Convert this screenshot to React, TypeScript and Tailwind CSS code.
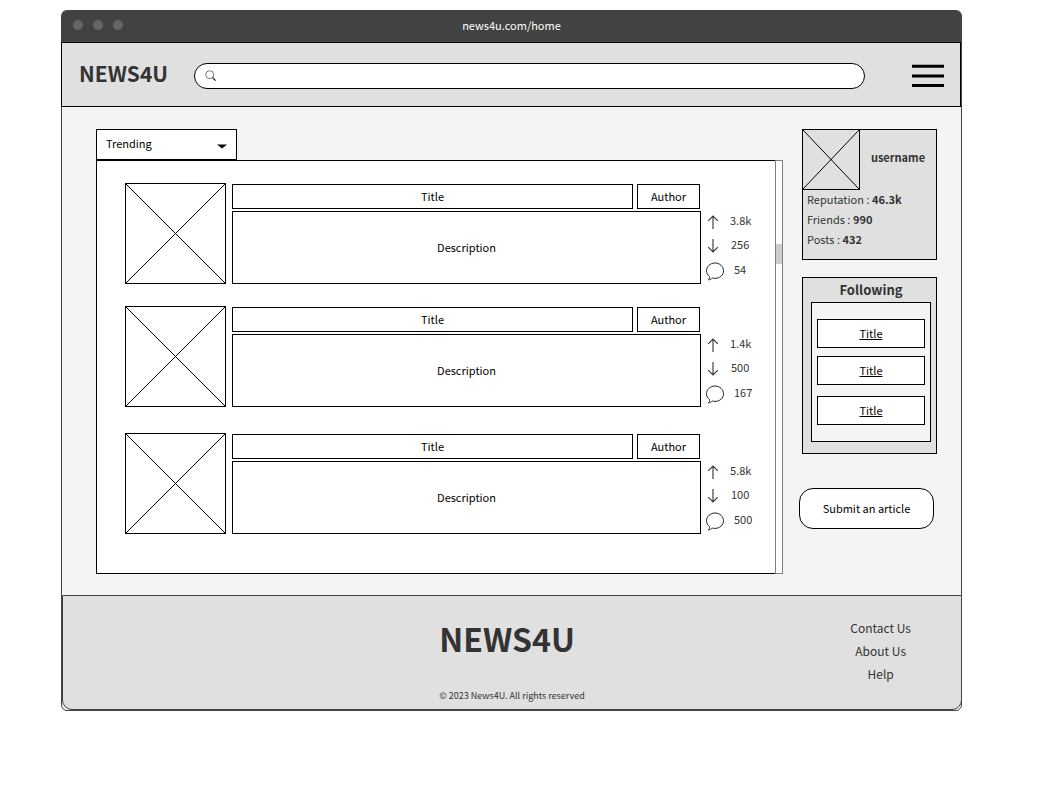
import type { ReactNode } from "react";

type Article = { up: string; down: string; comments: string };

const articles: Article[] = [
  { up: "3.8k", down: "256", comments: "54" },
  { up: "1.4k", down: "500", comments: "167" },
  { up: "5.8k", down: "100", comments: "500" },
];

const profileStats = [
  { label: "Reputation", value: "46.3k" },
  { label: "Friends", value: "990" },
  { label: "Posts", value: "432" },
];

function Placeholder({ className }: { className: string }) {
  return (
    <div className={`shrink-0 border border-black ${className}`}>
      <svg className="block h-full w-full" viewBox="0 0 100 100" preserveAspectRatio="none" aria-hidden="true">
        <path d="M0 0 100 100M100 0 0 100" stroke="#000" strokeWidth="1" vectorEffect="non-scaling-stroke" />
      </svg>
    </div>
  );
}

function ArrowUp() {
  return (
    <svg width="12" height="16" viewBox="0 0 12 16" fill="none" stroke="#333" strokeWidth="1.1" role="img" aria-label="Upvotes">
      <path d="M6 15V2M1.200 6.800 6 2l4.800 4.800" />
    </svg>
  );
}

function ArrowDown() {
  return (
    <svg width="12" height="16" viewBox="0 0 12 16" fill="none" stroke="#333" strokeWidth="1.1" role="img" aria-label="Downvotes">
      <path d="M6 1v13M1.200 9.200 6 14l4.800-4.800" />
    </svg>
  );
}

function Comment() {
  return (
    <svg width="18" height="20" viewBox="0 0 18 20" fill="none" stroke="#222" role="img" aria-label="Comments">
      <path d="M3.600 15.600C1.700 14.200.500 12 .500 9.800.500 5.500 4.300 2 9 2s8.500 3.500 8.500 7.800S13.700 17.400 9 17.400c-1 0-1.900-.1-2.800-.4-.9 1.100-2.100 1.700-3.900 1.900 1-.8 1.500-1.900 1.300-3.300Z" />
    </svg>
  );
}

function Stat({ icon, value, className }: { icon: ReactNode; value: string; className: string }) {
  return (
    <li className={`flex h-6 items-center ${className}`}>
      {icon}
      <span className="pb-1">{value}</span>
    </li>
  );
}

function ArticleRow({ article }: { article: Article }) {
  return (
    <article className="flex last:pt-1">
      <Placeholder className="h-[101px] w-[101px]" />
      <div className="ml-1.5 flex min-w-0 flex-1 flex-col gap-0.5 pt-px text-center">
        <div className="flex gap-1 pr-px">
          <h2 className="flex-1 border border-black leading-[23px]">Title</h2>
          <p className="w-[63px] border border-black leading-[23px]">Author</p>
        </div>
        <p className="flex flex-1 items-center justify-center border border-black pb-0.5">Description</p>
      </div>
      <ul className="w-[74px] shrink-0 pt-[27px] text-[#333]">
        <Stat icon={<ArrowUp />} value={article.up} className="gap-[11px] pl-1.5" />
        <Stat icon={<ArrowDown />} value={article.down} className="gap-3 pl-1.5" />
        <Stat icon={<Comment />} value={article.comments} className="mt-px gap-2.5 pl-[5px]" />
      </ul>
    </article>
  );
}

export default function App() {
  return (
    <div className="min-h-screen bg-white pt-2.5 pr-[92px] pl-[61px] font-['Noto_Sans_CJK_SC',sans-serif] text-[11px] leading-5 text-black">
      <div className="rounded-[6px] border border-[#424242] bg-[#f4f4f4]">
        <div className="grid h-[31px] grid-cols-[1fr_auto_1fr] items-center rounded-t-[4px] bg-[#424242] pb-[3px]">
          <div className="flex gap-2.5 pl-[11px]">
            <span className="h-2.5 w-2.5 rounded-full bg-[#666]" />
            <span className="h-2.5 w-2.5 rounded-full bg-[#666]" />
            <span className="h-2.5 w-2.5 rounded-full bg-[#666]" />
          </div>
          <span className="text-white">news4u.com/home</span>
        </div>

        <header className="-ml-px flex h-[65px] items-center border border-black bg-[#e0e0e0] pt-0.5 pr-4 pl-[17px]">
          <a href="#home" className="w-[115px] pb-1.5 text-[21px] leading-8 font-bold text-[#333]">
            NEWS4U
          </a>
          <div className="flex h-[26px] flex-1 items-center rounded-full border border-black bg-white pl-2.5">
            <svg width="12" height="12" viewBox="0 0 12 12" fill="none" stroke="#222" aria-hidden="true">
              <circle cx="4.700" cy="4.700" r="4" strokeWidth=".6" />
              <path d="m7.600 7.600 3 3" strokeWidth="1.300" />
            </svg>
            <input type="search" aria-label="Search" className="ml-2 min-w-0 flex-1 bg-transparent pr-4 outline-none" />
          </div>
          <button type="button" aria-label="Menu" className="ml-[47px]">
            <svg className="block" width="32" height="24" viewBox="0 0 32 24" stroke="#000" strokeWidth="3" aria-hidden="true">
              <path d="M0 2.300h32M0 12h32M0 21.500h32" />
            </svg>
          </button>
        </header>

        <main className="flex gap-4 pt-[22px] pr-6 pb-[21px] pl-[34px]">
          <section className="min-w-0 flex-1">
            <div className="relative w-[141px]">
              <select aria-label="Sort articles" className="block h-[31px] w-full appearance-none rounded-none border border-black bg-white pb-1 pl-[9px]">
                <option>Trending</option>
              </select>
              <svg className="pointer-events-none absolute top-[15px] right-2.5" width="10" height="5" viewBox="0 0 10 5" aria-hidden="true">
                <path d="M0 .500h10L5 4.500Z" />
              </svg>
            </div>
            <div className="flex">
              <div className="flex min-w-0 flex-1 flex-col gap-[22px] border-y border-l border-black bg-white pt-[22px] pb-[39px] pl-7">
                {articles.map((article) => (
                  <ArticleRow key={article.up} article={article} />
                ))}
              </div>
              <div className="w-2 border border-[#808080] bg-white pt-[83px]">
                <div className="h-5 bg-[#ccc]" />
              </div>
            </div>
          </section>

          <aside className="w-[138px] shrink-0">
            <section className="ml-[3px] h-[131px] border border-black bg-[#e0e0e0] text-[#333]">
              <div className="-mt-px -ml-px flex items-center">
                <Placeholder className="h-[61px] w-[58px]" />
                <p className="flex-1 pb-1.5 text-center font-bold">username</p>
              </div>
              <ul className="-mt-px pl-1">
                {profileStats.map((stat) => (
                  <li key={stat.label}>
                    {stat.label} : <strong className="font-bold">{stat.value}</strong>
                  </li>
                ))}
              </ul>
            </section>

            <section className="mt-[17px] ml-[3px] border border-black bg-[#e0e0e0] pr-[5px] pb-[11px] pl-2">
              <h2 className="text-center text-[13px] leading-6 font-bold text-[#333]">Following</h2>
              <ul className="flex flex-col gap-2 border border-black bg-[#f4f4f4] px-[5px] py-4 text-center leading-[27px]">
                <li className="border border-black bg-white">
                  <a href="#first" className="underline">Title</a>
                </li>
                <li className="border border-black bg-white">
                  <a href="#second" className="underline">Title</a>
                </li>
                <li className="mt-[3px] border border-black bg-white">
                  <a href="#third" className="underline">Title</a>
                </li>
              </ul>
            </section>

            <button type="button" className="mt-[34px] h-[41px] w-[135px] rounded-[14px] border border-black bg-white pb-0.5">
              Submit an article
            </button>
          </aside>
        </main>

        <footer className="-mr-px grid grid-cols-[1fr_auto_1fr] rounded-b-[10px] border border-[#424242] bg-[#e0e0e0] text-[#333]">
          <div className="col-start-2 pt-[18px] pb-[3px]">
            <p className="text-[32px] leading-[48px] font-bold">NEWS4U</p>
            <p className="mt-6 text-[9px] leading-5">© 2023 News4U. All rights reserved</p>
          </div>
          <nav className="flex flex-col pt-5 pr-[50px] text-[12px] leading-[23px]">
            <div className="flex flex-col items-center self-end">
              <a href="#contact">Contact Us</a>
              <a href="#about">About Us</a>
              <a href="#help">Help</a>
            </div>
          </nav>
        </footer>
      </div>
    </div>
  );
}
